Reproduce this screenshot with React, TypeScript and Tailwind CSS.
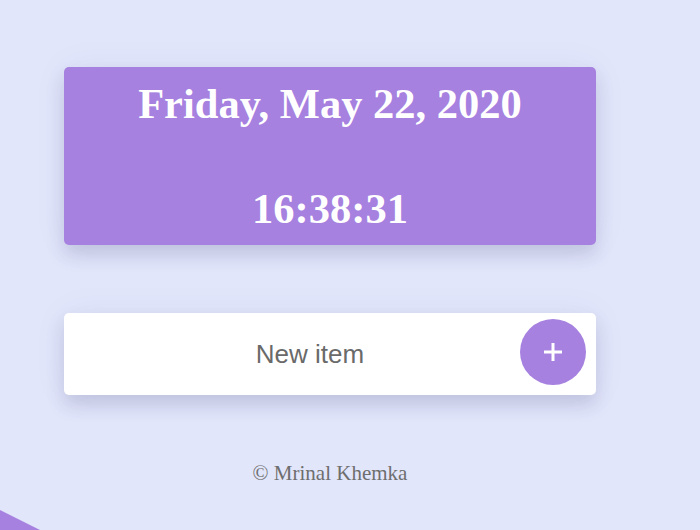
import React from "react";

export default function App() {
  return (
    <div className="relative w-[700px] h-[530px] overflow-hidden bg-[#e2e6fb]">
      <div className="pt-[67px] pl-[64px] w-[596px] flex flex-col">
        <div className="w-[532px] h-[178px] rounded-[5px] bg-[#a681e0] shadow-[0_10px_18px_rgba(60,60,110,0.18),0_0_36px_rgba(60,60,110,0.05)] flex flex-col items-center text-white font-bold text-[42.5px] leading-[48px] [font-family:'Liberation_Serif',serif]">
          <div className="mt-[13px]">Friday, May 22, 2020</div>
          <div className="mt-[57px]">16:38:31</div>
        </div>

        <div className="mt-[68px] w-[532px] h-[82px] rounded-[5px] bg-white shadow-[0_10px_18px_rgba(60,60,110,0.18),0_0_36px_rgba(60,60,110,0.05)] flex items-center">
          <div className="flex-1 pl-[36px] text-center text-[26px] leading-[30px] text-[#6a6a6a] [font-family:'Liberation_Sans',sans-serif]">
            New item
          </div>
          <div className="w-[66px] h-[66px] mr-[10px] mb-[4px] rounded-full bg-[#a681e0] flex items-center justify-center">
            <svg width="20" height="20" viewBox="0 0 20 20">
              <path d="M10 1v18M1 10h18" stroke="white" strokeWidth="3" />
            </svg>
          </div>
        </div>

        <div className="mt-[64px] w-[532px] text-center text-[21px] leading-[28px] text-[#6e6e6e] [font-family:'Liberation_Serif',serif]">
          © Mrinal Khemka
        </div>
      </div>

      <svg className="absolute left-0 bottom-0" width="60" height="30" viewBox="0 0 60 30">
        <polygon points="0,10 40,30 0,30" fill="#a681e0" />
      </svg>
    </div>
  );
}
